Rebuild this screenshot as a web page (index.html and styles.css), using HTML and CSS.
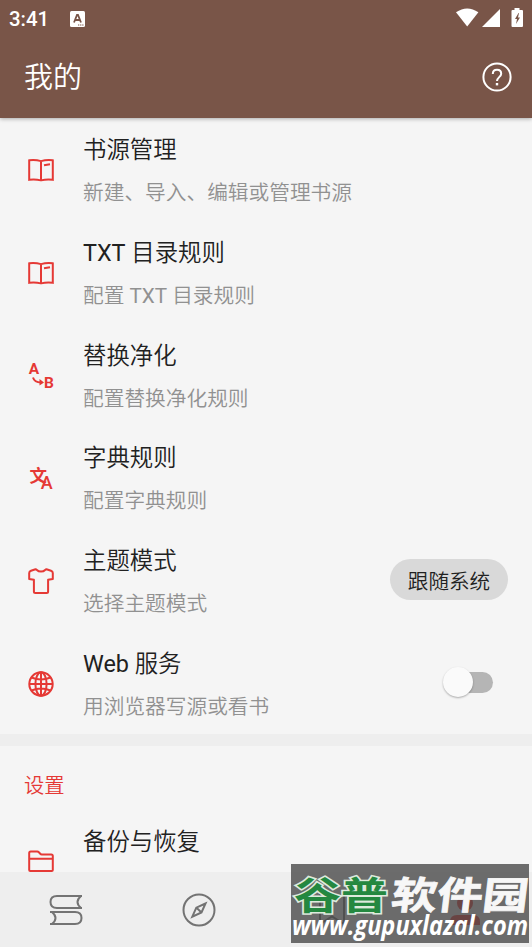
FILE: index.html
```html
<!DOCTYPE html>
<html lang="zh-CN">
<head>
<meta charset="utf-8">
<title>我的</title>
<link rel="stylesheet" href="styles.css">
</head>
<body>
<header class="header">
  <div class="status">
    <span class="clock">3:41</span>
    <svg class="ime" width="15" height="16" viewBox="0 0 15 16"><rect width="15" height="16" rx="1.500" fill="#fff"/><path d="M4 11.500 7 4h1l3 7.500M5 9h5" fill="none" stroke="#795548" stroke-width="1.800"/><path d="M8 14h6" stroke="#795548" stroke-dasharray="1.300 .8"/></svg>
    <svg class="signals" width="68" height="20" viewBox="0 0 68 20" fill="#fff"><path d="M0 4.200Q11.200-3.400 22.400 4.200L11.200 18.400Z"/><path d="M44 1v18H26Z"/><path d="M58.500 0h5v2H66q1 0 1 1v15q0 1-1 1H56.500q-1 0-1-1V3q0-1 1-1h2Z"/><path d="m62.500 5-3.500 6h2l-1 5 4-6.500h-2l1-4.500Z" fill="#795548"/></svg>
  </div>
  <div class="toolbar">
    <h1>我的</h1>
    <svg width="30" height="30" viewBox="0 0 30 30" fill="none" stroke="#fff" stroke-width="2"><circle cx="15" cy="15" r="13.600"/><path d="M10.800 12c0-2.700 1.700-4.300 4.200-4.300s4.200 1.600 4.200 4c0 3.200-4.200 3.700-4.200 7.300"/><path d="M15 21v2.400" stroke-width="2.400"/></svg>
  </div>
</header>
<main class="content">
  <section class="group">
    <div class="row">
      <svg class="icon" viewBox="0 0 26 26"><path d="M1.200 3.300q6-.8 11.800.8 5.800-1.600 11.800-.8v19.500q-6-.8-11.800.6-5.800-1.400-11.800-.6ZM13 4v19M16 8.300l6-1"/></svg>
      <div class="text"><p class="title">书源管理</p><p class="sub">新建、导入、编辑或管理书源</p></div>
    </div>
    <div class="row">
      <svg class="icon" viewBox="0 0 26 26"><path d="M1.200 3.300q6-.8 11.800.8 5.800-1.600 11.800-.8v19.500q-6-.8-11.800.6-5.800-1.400-11.800-.6ZM13 4v19M16 8.300l6-1"/></svg>
      <div class="text"><p class="title"><span class="latin">TXT</span> 目录规则</p><p class="sub">配置 <span class="latin">TXT</span> 目录规则</p></div>
    </div>
    <div class="row">
      <svg class="icon" viewBox="0 0 26 26"><text class="glyph" x=".8" y="10.800" font-size="15.500">A</text><text class="glyph" x="16" y="25.200" font-size="15.500">B</text><path d="M5 14.500q1.500 5 8 5"/><path d="m11.500 16 4.500 3.600-4.500 3Z" fill="#e53935" stroke="none"/></svg>
      <div class="text"><p class="title">替换净化</p><p class="sub">配置替换净化规则</p></div>
    </div>
    <div class="row">
      <svg class="icon" viewBox="0 0 26 26"><text class="han" x="1.500" y="17" font-size="17.500">文</text><text class="glyph-a" x="12.700" y="24" font-size="18">A</text></svg>
      <div class="text"><p class="title">字典规则</p><p class="sub">配置字典规则</p></div>
    </div>
    <div class="row">
      <svg class="icon" viewBox="0 0 26 26"><path stroke-linejoin="round" d="M7.500 1.200q.8 0 1.400.8 1.500 1.600 4.100 1.600T17.100 2q.6-.8 1.400-.8l4.500 1.500q1.800.7 1.800 2.300V11l-4.700.8V23.500q0 1.500-1.500 1.500H7.400q-1.500 0-1.500-1.500V11.800L1.200 11V5q0-1.600 1.800-2.300Z"/></svg>
      <div class="text"><p class="title">主题模式</p><p class="sub">选择主题模式</p></div>
      <span class="chip">跟随系统</span>
    </div>
    <div class="row">
      <svg class="icon" viewBox="0 0 26 26"><circle cx="13" cy="13" r="11.700"/><ellipse cx="13" cy="13" rx="5.600" ry="11.700"/><path d="M13 1v24M1.500 13h23M3.500 6.500q9.500 4 19 0M3.500 19.500q9.500-4 19 0"/></svg>
      <div class="text"><p class="title"><span class="latin">Web</span> 服务</p><p class="sub">用浏览器写源或看书</p></div>
      <span class="switch"><span class="thumb"></span></span>
    </div>
  </section>
  <section class="group settings">
    <h2>设置</h2>
    <div class="row">
      <svg class="icon" viewBox="0 0 26 26"><path stroke-linejoin="round" d="M1.200 21V4q0-1.500 1.500-1.500h6.500q1 0 1.700.8l1.300 1.400q.6.800 1.500.8h9.600q1.500 0 1.500 1.500V21q0 1-1 1H2.200q-1 0-1-1ZM1.200 9.800h23.600"/></svg>
      <div class="text"><p class="title">备份与恢复</p></div>
    </div>
  </section>
</main>
<nav class="nav">
  <svg width="34" height="34" viewBox="0 0 34 34"><path d="M33 3H8Q1.500 3 1.500 9T8 15h25M32 3q-7 6 0 12M1 19h25q6.500 0 6.500 6T26 31H1M3 19q7 6 0 12"/></svg>
  <svg width="34" height="34" viewBox="0 0 34 34"><circle cx="17" cy="17" r="15.500"/><path d="m23.500 10.500-9.200 4.200-4 9 9.200-4.200ZM14.500 14.800l5 4.600"/></svg>
  <svg width="34" height="34" viewBox="0 0 34 34"><path d="M5 2h24v29L17 23.500 5 31Z"/></svg>
  <svg class="active" width="34" height="34" viewBox="0 0 34 34"><circle cx="17" cy="10" r="8"/><path d="M2 32v-3q0-7 7-7h16q7 0 7 7v3Z"/></svg>
</nav>
<aside class="watermark">
  <svg width="238" height="79" viewBox="0 0 238 79">
    <g class="brand"><text class="green" x="3" y="45" textLength="94" lengthAdjust="spacingAndGlyphs">谷普</text><text class="white" transform="translate(99 45) skewX(-7)" textLength="137" lengthAdjust="spacingAndGlyphs">软件园</text></g>
    <text class="url" x="1" y="71" textLength="236" lengthAdjust="spacingAndGlyphs">www.gupuxlazal.com</text>
  </svg>
</aside>
</body>
</html>
```
FILE: styles.css
```css
* { box-sizing: border-box; margin: 0; padding: 0; }
body {
  position: relative;
  display: flex;
  flex-direction: column;
  height: 947px;
  overflow: hidden;
  background: #f5f5f5;
  color: #212121;
  font-family: Roboto, "Noto Sans CJK SC", sans-serif;
}
svg { display: block; flex: none; }
.header {
  position: relative;
  z-index: 1;
  height: 118px;
  flex: none;
  background: #795548;
  color: #fff;
  box-shadow: 0 1px 4px rgba(0, 0, 0, .3);
}
.status { display: flex; align-items: center; height: 36px; padding: 1px 8px 0 9px; }
.clock { width: 61px; font-size: 20.4px; font-weight: 500; }
.signals { margin: -2px 0 0 auto; }
.toolbar { display: flex; align-items: center; justify-content: space-between; height: 82px; padding: 0 20px 0 24px; }
h1 { padding-top: 2px; font-size: 29px; font-weight: 350; line-height: 40px; }
.content { flex: 1; min-height: 0; overflow: hidden; }
.row { display: flex; align-items: center; height: 102.7px; padding: 2px 24px 0 28px; }
.icon { width: 26px; height: 26px; margin-right: 29px; overflow: visible; fill: none; stroke: #e53935; stroke-width: 2; }
.glyph, .glyph-a, .han { fill: #e53935; stroke: none; font-family: Roboto, sans-serif; font-weight: 700; }
.glyph-a { font-weight: 500; }
.han { font-family: "Noto Sans CJK SC", sans-serif; font-weight: 700; }
.text { flex: 1; height: 86px; padding-top: 1px; }
.title { font-size: 23.4px; font-weight: 350; line-height: 44px; }
.sub { color: #919191; font-size: 20.7px; font-weight: 350; line-height: 42px; }
.latin { font-weight: 400; }
.chip { display: flex; align-items: center; justify-content: center; width: 118px; height: 41px; margin-top: -3px; border-radius: 21px; background: #d9d9d9; font-size: 20.6px; font-weight: 350; }
.switch { position: relative; width: 42px; height: 21px; margin: -2px 15px 0 0; border-radius: 11px; background: #b5b5b5; }
.thumb { position: absolute; left: -8px; top: -5px; width: 30px; height: 30px; border-radius: 50%; background: #fafafa; box-shadow: 0 1px 2px rgba(0, 0, 0, .3); }
.settings { border-top: 12px solid #eee; }
h2 { height: 64px; padding: 25px 24px 0; color: #e53935; font-size: 20.3px; font-weight: 350; line-height: 30px; }
.nav { display: grid; grid-template-columns: repeat(4, 1fr); align-items: center; justify-items: center; height: 75px; padding: 0 1px 0 0; flex: none; background: #eee; fill: none; stroke: #737373; stroke-width: 2; }
.nav .active { fill: #e53935; stroke: none; }
.watermark { position: absolute; left: 291px; top: 864px; width: 238px; height: 79px; background: rgba(71, 71, 71, .79); }
.brand { font-family: "Noto Sans CJK SC", sans-serif; font-size: 38px; font-weight: 700; opacity: .95; }
.green { fill: #218a3e; stroke: #e4f2e4; stroke-width: 3; paint-order: stroke; }
.white { fill: #fff; stroke: #fff; stroke-width: .8; }
.url { fill: #fff; font: italic 700 26px "Open Sans", sans-serif; }
```
